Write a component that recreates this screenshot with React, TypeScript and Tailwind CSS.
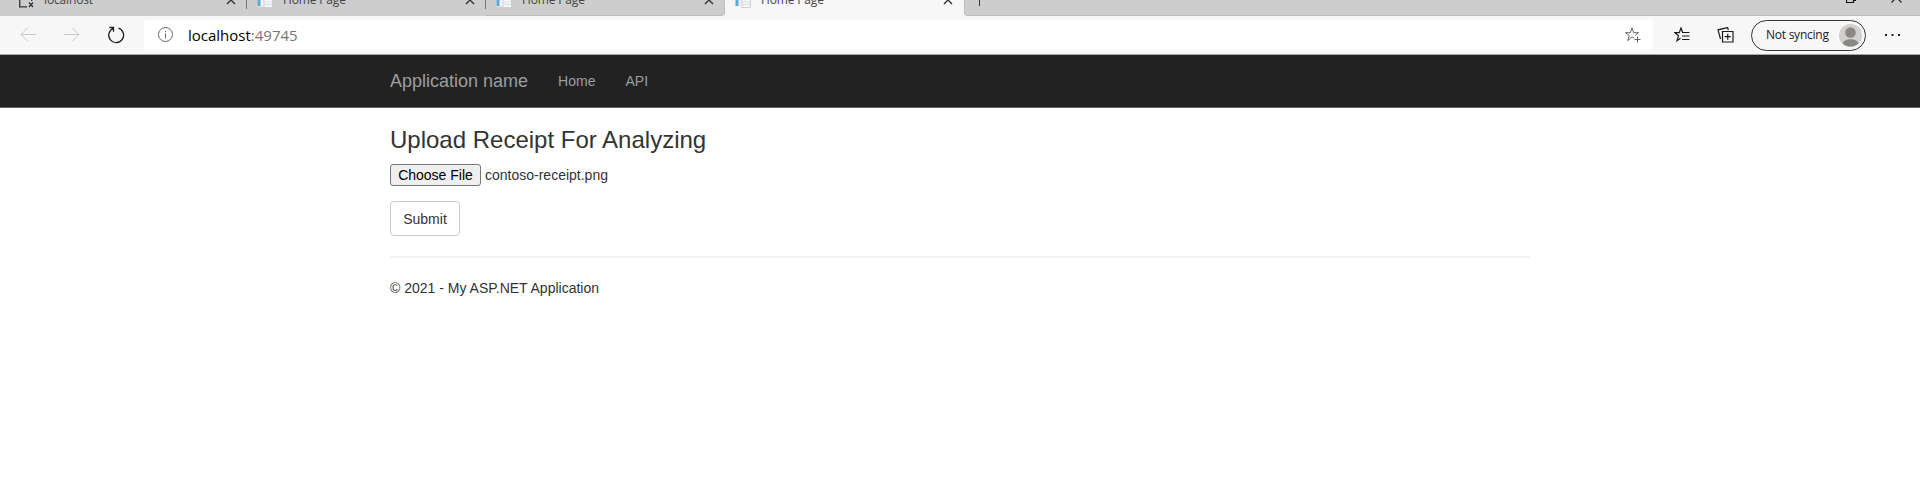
import React from "react";

const CloseIcon = () => (
  <svg width="10" height="10" viewBox="0 0 10 10" fill="none" stroke="#333" strokeWidth="1.4">
    <path d="M1 1l8 8M9 1L1 9" />
  </svg>
);

const PageIcon = () => (
  <svg width="16" height="16" viewBox="0 0 16 16">
    <rect x="0.5" y="0.5" width="14" height="14" fill="#f0f2f5" />
    <rect x="0.5" y="0" width="3" height="14" fill="#5aa9d6" />
    <rect x="7" y="7" width="8.5" height="8.5" fill="#f6f6f8" stroke="#c3c9d3" strokeWidth="0.8" />
    <path d="M8 10h7M8 12.500h7" stroke="#d5d9e0" strokeWidth="0.8" />
  </svg>
);

const ErrorPageIcon = () => (
  <svg width="16" height="16" viewBox="0 0 16 16" fill="none" stroke="#333" strokeWidth="1.3">
    <path d="M9 14.800H1.700V1h8l4 4v4" />
    <path d="M11 10.500l4 4.500M15 10.500l-4 4.500" />
  </svg>
);

type TabProps = { title: string; active?: boolean; failed?: boolean; divider?: boolean; rounded?: string };

const Tab = ({ title, active, failed, divider, rounded = "" }: TabProps) => (
  <div className={`flex w-[239px] shrink-0 ${divider ? "bg-[#cdcdcd]" : "bg-[#f7f7f7]"}`}>
    <div
      className={`flex h-[33px] w-full items-center pl-[10px] ${
        active ? "bg-[#f7f7f7]" : "bg-[#cdcdcd]"
      } ${rounded}`}
    >
      <div className="mt-px">{failed ? <ErrorPageIcon /> : <PageIcon />}</div>
      <span className="ml-[10px] w-[182px] text-[12px] leading-4 tracking-[-0.15px] text-[#444]">{title}</span>
      <CloseIcon />
      <div className={`mb-[2px] ml-auto h-[20px] w-px ${divider ? "bg-[#777]" : ""}`} />
    </div>
  </div>
);

const TabStrip = () => (
  <div className="flex h-4 items-end overflow-hidden bg-[#cdcdcd] pl-[8px] font-['Open_Sans','Noto_Sans',sans-serif]">
    <Tab title="localhost" failed divider />
    <Tab title="Home Page" divider />
    <Tab title="Home Page" rounded="rounded-br-[4px] border-b border-r border-[#bdbdbd] pt-px" />
    <Tab title="Home Page" active />
    <div className="flex-1 bg-[#f7f7f7]">
      <div className="flex h-[33px] items-center rounded-bl-[4px] border-b border-l border-[#bdbdbd] bg-[#cdcdcd] pl-[8px]">
        <svg width="13" height="13" viewBox="0 0 13 13" stroke="#333">
          <path d="M6.500 0v13M0 6.500h13" />
        </svg>
        <svg width="10" height="10" viewBox="0 0 10 10" fill="none" stroke="#111" strokeWidth="1.200" className="mr-[35px] mb-[3px] ml-auto">
          <path d="M0.500 2.500h7v7h-7zM2.500 2.500v-2h7v7h-2" />
        </svg>
        <svg width="11" height="11" viewBox="0 0 11 11" stroke="#222" strokeWidth="1.200" className="mr-[18px] mb-[4px]">
          <path d="M0.500 0.500l10 10M10.500 0.500l-10 10" />
        </svg>
      </div>
    </div>
  </div>
);

const Toolbar = () => (
  <div className="flex h-[39px] items-center border-b border-[#a5a5a5] bg-[#f7f7f7] font-['Open_Sans','Noto_Sans',sans-serif]">
    <svg width="16" height="16" viewBox="0 0 16 16" fill="none" stroke="#c9c9c9" className="ml-[20px] shrink-0">
      <path d="M16 7.500H1M8 0.500L1 7.500l7 7" />
    </svg>
    <svg width="16" height="16" viewBox="0 0 16 16" fill="none" stroke="#c9c9c9" className="ml-[28px] shrink-0">
      <path d="M0 7.500h15M8 0.500l7 7-7 7" />
    </svg>
    <svg width="18" height="18" viewBox="0 0 18 18" fill="none" stroke="#1c1c1c" strokeWidth="1.300" className="ml-[27px] shrink-0">
      <path d="M11.500 2.200a7.400 7.400 0 1 1-5.200 0.200M2.300 1.500h4.200v4.200" />
    </svg>
    <div className="ml-[19px] flex h-[30px] w-[1509px] shrink-0 items-center rounded-[4px] bg-white pr-[12px] pl-[14px]">
      <svg width="16" height="16" viewBox="0 0 16 16" fill="none" stroke="#666">
        <circle cx="7.500" cy="7.500" r="7" />
        <path d="M7.500 6.500v5M7.500 4v1.200" />
      </svg>
      <span className="ml-[14px] text-[15px] leading-5 text-black">
        localhost<span className="text-[#757575]">:49745</span>
      </span>
      <svg width="16" height="16" viewBox="0 0 16 16" fill="none" stroke="#666" className="ml-auto">
        <path d="M9 11L7 9.900 2.700 13.600 4.300 8.600 0.400 5.700h4.900L7 0.800l1.700 4.900h4.900L10.300 8.300" />
        <path d="M12.500 9.500v6M9.500 12.500h6" />
      </svg>
    </div>
    <svg width="16" height="16" viewBox="0 0 16 16" fill="none" stroke="#1c1c1c" strokeWidth="1.200" className="ml-[21px] shrink-0">
      <path d="M6.500 11.200L3 13.800l1.500-5L0.800 5.700h4.500L7 0.900l1.600 4.600M8 5.500h7.500M8 9h7.500M8 12.500h7.500" />
    </svg>
    <svg width="17" height="16" viewBox="0 0 17 16" fill="none" stroke="#1c1c1c" strokeWidth="1.200" className="ml-[27px] shrink-0">
      <path d="M5.500 4.500h10.500v10.500H5.500zM10.750 6.700v6M7.750 9.700h6M3.500 12L1 2.800l9.600-2.200 0.700 2.400" />
    </svg>
    <div className="ml-[17px] flex h-[31px] w-[115px] shrink-0 items-center rounded-full border border-[#333] pr-[3px] pl-[14px]">
      <span className="text-[12px] leading-4 tracking-[-0.25px] whitespace-nowrap text-[#222]">Not syncing</span>
      <svg width="23" height="23" viewBox="0 0 23 23" className="ml-auto shrink-0">
        <circle cx="11.500" cy="11.500" r="11.500" fill="#d2d0ce" />
        <circle cx="11.500" cy="8.500" r="5.300" fill="#8a8886" />
        <path d="M3.500 19.300c2-5.500 14-5.500 16 0a11.500 11.500 0 0 1-16 0z" fill="#8a8886" />
      </svg>
    </div>
    <svg width="16" height="4" viewBox="0 0 16 4" fill="#222" className="ml-[19px] shrink-0">
      <rect x="0" y="1" width="2" height="2" />
      <rect x="6.500" y="1" width="2" height="2" />
      <rect x="13" y="1" width="2" height="2" />
    </svg>
  </div>
);

export default function App() {
  return (
    <div className="h-[485px] overflow-hidden bg-white font-['Liberation_Sans',Arial,sans-serif] text-[14px] leading-5 text-[#333]">
      <TabStrip />
      <Toolbar />
      <nav className="flex h-[53px] items-center border-b border-[#666] bg-[#222] pl-[390px] text-[#9d9d9d]">
        <span className="text-[18px]">Application name</span>
        <span className="ml-[30px]">Home</span>
        <span className="ml-[30px]">API</span>
      </nav>
      <main className="w-[1530px] pl-[390px]">
        <h3 className="pt-[19px] text-[24px] leading-[26px]">Upload Receipt For Analyzing</h3>
        <div className="mt-[11px] flex items-center">
          <button className="h-[22px] w-[91px] rounded-[3px] border border-[#767676] bg-[#efefef] leading-[18px] text-black">
            Choose File
          </button>
          <span className="ml-1">contoso-receipt.png</span>
        </div>
        <button className="mt-[15px] block h-[35px] w-[70px] rounded-[4px] border border-[#ccc]">Submit</button>
        <hr className="mt-[20px] border-t-2 border-[#f3f3f3]" />
        <footer className="mt-[20px]">© 2021 - My ASP.NET Application</footer>
      </main>
    </div>
  );
}
